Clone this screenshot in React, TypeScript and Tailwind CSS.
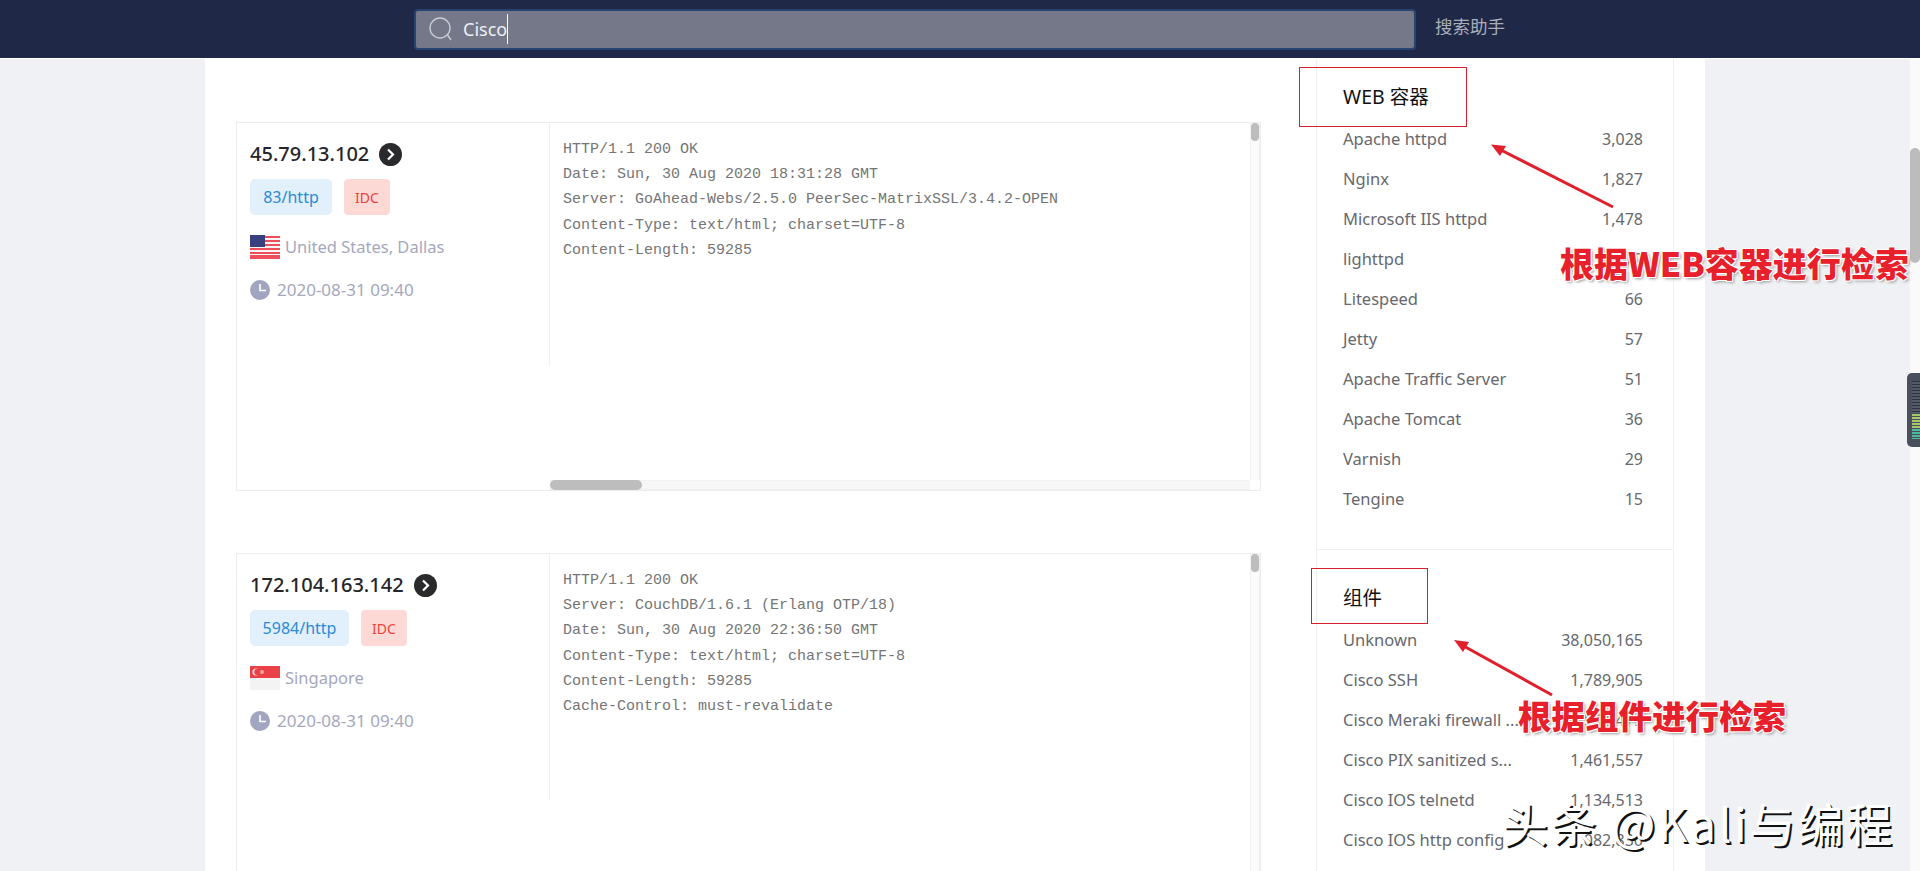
const webServers = [
  ['Apache httpd', '3,028'],
  ['Nginx', '1,827'],
  ['Microsoft IIS httpd', '1,478'],
  ['lighttpd', '72'],
  ['Litespeed', '66'],
  ['Jetty', '57'],
  ['Apache Traffic Server', '51'],
  ['Apache Tomcat', '36'],
  ['Varnish', '29'],
  ['Tengine', '15'],
];

const components = [
  ['Unknown', '38,050,165'],
  ['Cisco SSH', '1,789,905'],
  ['Cisco Meraki firewall ...', '1,541,479'],
  ['Cisco PIX sanitized s...', '1,461,557'],
  ['Cisco IOS telnetd', '1,134,513'],
  ['Cisco IOS http config', '1,082,830'],
];

function UsFlag() {
  return (
    <svg width="30" height="24" viewBox="0 0 30 24" className="shrink-0">
      <rect width="30" height="24" fill="#f6f4f6" />
      {[0, 4, 8, 12, 16, 20].map((y) => (
        <rect key={y} y={y + 1} width="30" height="2" fill="#ee4e5c" />
      ))}
      <rect y="20" width="30" height="4" fill="#ee4e5c" />
      <rect width="15" height="12" fill="#39407f" />
    </svg>
  );
}

function SgFlag() {
  return (
    <svg width="30" height="24" viewBox="0 0 30 24" className="shrink-0">
      <rect width="30" height="24" fill="#f4f3f4" />
      <rect width="30" height="12" fill="#ea4148" />
      <circle cx="6" cy="6" r="3.6" fill="#fbe3e3" />
      <circle cx="7.4" cy="6" r="3.2" fill="#ea4148" />
      <circle cx="12" cy="6" r="2" fill="#f5a3a6" />
    </svg>
  );
}

function ClockIcon() {
  return (
    <svg width="20" height="20" viewBox="0 0 20 20" className="shrink-0">
      <circle cx="10" cy="10" r="10" fill="#a2a5c0" />
      <path d="M10 4v6.5h6" fill="none" stroke="#fff" strokeWidth="1.6" />
    </svg>
  );
}

function GoIcon() {
  return (
    <svg width="23" height="23" viewBox="0 0 23 23" className="shrink-0">
      <circle cx="11.5" cy="11.5" r="11.5" fill="#2a2a2c" />
      <path d="M9 6.5l5 5-5 5" fill="none" stroke="#fff" strokeWidth="2.2" />
    </svg>
  );
}

function HostCard({ ip, port, portWidth, flag, place, lines, paneHeight, gap }: {
  ip: string;
  port: string;
  portWidth: string;
  flag: React.ReactNode;
  place: string;
  lines: string[];
  paneHeight: string;
  gap: string;
}) {
  return (
    <div className={`flex flex-col border border-[#ececee] h-[369px] ${gap}`}>
      <div className="flex flex-1 min-h-0">
        <div className={`w-[313px] shrink-0 border-r border-[#efeff1] pl-[13px] pt-[17px] ${paneHeight}`}>
          <div className="flex items-center gap-[10px] h-[28px]">
            <span className="text-[20px] text-[#26262a] font-medium">{ip}</span>
            <GoIcon />
          </div>
          <div className="flex items-center gap-[12px] mt-[11px]">
            <span className={`${portWidth} h-[36px] rounded-[5px] bg-[#e2f0fb] text-[#2b8ad6] text-[16px] flex items-center justify-center`}>
              {port}
            </span>
            <span className="w-[46px] h-[36px] rounded-[4px] bg-[#fdd9d6] text-[#e8433a] text-[14px] flex items-center justify-center">
              IDC
            </span>
          </div>
          <div className="flex items-center gap-[5px] mt-[20px] h-[24px] text-[16.500px] text-[#a5a7bd]">
            {flag}
            <span>{place}</span>
          </div>
          <div className="flex items-center gap-[7px] mt-[19px] h-[24px] text-[17px] text-[#a5a7bd]">
            <ClockIcon />
            <span>2020-08-31 09:40</span>
          </div>
        </div>
        <div className="flex-1 pl-[13px] pt-[14px] font-['Liberation_Mono',monospace] text-[15px] leading-[25.2px] text-[#757575] whitespace-pre">
          {lines.map((line) => (
            <div key={line}>{line}</div>
          ))}
        </div>
        <div className="w-[10px] shrink-0 border-x border-[#f1f1f1] bg-[#fbfbfb]">
          <div className="w-[8px] h-[18px] rounded-[4px] bg-[#bdbdbd]" />
        </div>
      </div>
      <div className="flex h-[10px] shrink-0">
        <div className="w-[313px] shrink-0" />
        <div className="flex-1 bg-[#f7f7f7] border-y border-[#f1f1f1] relative">
          <div className="absolute left-0 top-[-1px] w-[92px] h-[10px] rounded-[5px] bg-[#bdbdbd]" />
        </div>
        <div className="w-[10px] shrink-0" />
      </div>
    </div>
  );
}

function FacetRow({ name, count }: { name: string; count: string }) {
  return (
    <div className="flex items-center justify-between h-10 text-[#66686e]">
      <span className="whitespace-nowrap text-[16.500px]">{name}</span>
      <span className="text-[16px]">{count}</span>
    </div>
  );
}

function Annotations() {
  const label = "font-['Noto_Sans_CJK_SC',sans-serif] font-black text-[#e7202c] whitespace-nowrap [text-shadow:1px_1px_0_#fff,-1px_-1px_0_#fff,1px_-1px_0_#fff,-1px_1px_0_#fff,2px_2px_3px_#999]";
  return (
    <>
      <div className="absolute left-[1299px] top-[67px] w-[168px] h-[60px] border border-[#d4202c]" />
      <div className="absolute left-[1311px] top-[568px] w-[117px] h-[56px] border border-[#d4202c]" />
      <svg className="absolute left-0 top-0 pointer-events-none" width="1920" height="871">
        <path d="M1613 207L1497 148" stroke="#e0202c" strokeWidth="3" />
        <path d="M1491 144.500L1506 146L1500 156Z" fill="#e0202c" />
        <path d="M1552 695L1460 644" stroke="#e0202c" strokeWidth="3" />
        <path d="M1454 640L1469 642L1463 652Z" fill="#e0202c" />
      </svg>
      <div className={`absolute left-[1560px] top-[238px] text-[34px] leading-[50px] ${label}`}>根据WEB容器进行检索</div>
      <div className={`absolute left-[1518px] top-[690px] text-[33.500px] leading-[50px] ${label}`}>根据组件进行检索</div>
      <div className="absolute left-[1502px] top-[792px] font-['Noto_Sans_CJK_SC',sans-serif] text-[46px] tracking-[2.500px] leading-[60px] text-white whitespace-nowrap [text-shadow:2px_2px_0_#111]">
        头条 @Kali与编程
      </div>
      <div className="absolute right-0 top-[373px] w-[13px] h-[74px] rounded-l-[5px] bg-[#4a4f5c] pl-[5px] pt-[8px] flex flex-col justify-between pb-[8px]">
        <div className="h-[32px] w-[8px] bg-[repeating-linear-gradient(#2f3340_0,#2f3340_1px,#555a68_1px,#555a68_3px)]" />
        <div className="h-[14px] w-[8px] bg-[repeating-linear-gradient(#a4c86a_0,#a4c86a_2px,#4a4f5c_2px,#4a4f5c_3px)]" />
        <div className="h-[10px] w-[8px] bg-[repeating-linear-gradient(#4fb8a0_0,#4fb8a0_2px,#4a4f5c_2px,#4a4f5c_3px)]" />
      </div>
    </>
  );
}

export default function App() {
  return (
    <div className="relative h-[871px] overflow-hidden flex flex-col bg-[#eff1f4] font-['Noto_Sans','Noto_Sans_CJK_SC',sans-serif]">
      {/* Top bar */}
      <header className="h-[58px] shrink-0 bg-[#1f2947] flex items-center pl-[414px]">
        <div className="w-[1002px] h-[41px] rounded-[4px] bg-[#747889] border-2 border-[#27436f] flex items-center pl-[13px] gap-[10px]">
          <svg width="24" height="24" viewBox="0 0 24 24" fill="none" stroke="#c9cbd4" strokeWidth="1.4">
            <circle cx="11" cy="11" r="10" />
            <path d="M18.500 18l3.500 5" />
          </svg>
          <span className="text-[18px] text-[#eef0f4] border-r border-white leading-[30px]">Cisco</span>
        </div>
        <span className="ml-[19px] mb-[5px] text-[17.500px] text-[#a9adb9]">搜索助手</span>
      </header>

      <div className="flex flex-1 min-h-0 border-t border-white">
        <div className="w-[205px] shrink-0" />
        <main className="w-[1500px] shrink-0 bg-white flex pl-[31px]">
          {/* Results */}
          <div className="w-[1025px] shrink-0 pt-[63px]">
            <HostCard
              ip="45.79.13.102"
              port="83/http"
              portWidth="w-[82px]"
              flag={<UsFlag />}
              place="United States, Dallas"
              paneHeight="h-[243px]"
              gap="mb-[62px]"
              lines={[
                'HTTP/1.1 200 OK',
                'Date: Sun, 30 Aug 2020 18:31:28 GMT',
                'Server: GoAhead-Webs/2.5.0 PeerSec-MatrixSSL/3.4.2-OPEN',
                'Content-Type: text/html; charset=UTF-8',
                'Content-Length: 59285',
              ]}
            />
            <HostCard
              ip="172.104.163.142"
              port="5984/http"
              portWidth="w-[99px]"
              flag={<SgFlag />}
              place="Singapore"
              paneHeight="h-[245px]"
              gap=""
              lines={[
                'HTTP/1.1 200 OK',
                'Server: CouchDB/1.6.1 (Erlang OTP/18)',
                'Date: Sun, 30 Aug 2020 22:36:50 GMT',
                'Content-Type: text/html; charset=UTF-8',
                'Content-Length: 59285',
                'Cache-Control: must-revalidate',
              ]}
            />
          </div>

          {/* Facets */}
          <aside className="w-[358px] shrink-0 ml-[55px] border-x border-[#eeeff1]">
            <section className="h-[491px] border-b border-[#eeeff1] pl-[26px] pr-[30px] pt-[17px]">
              <h3 className="h-[41px] mb-[2px] flex items-center text-[19.500px] text-[#111]">WEB 容器</h3>
              {webServers.map(([name, count]) => (
                <FacetRow key={name} name={name} count={count} />
              ))}
            </section>
            <section className="pl-[26px] pr-[30px] pt-[27px]">
              <h3 className="h-[42px] mb-[1px] flex items-center text-[19.500px] text-[#111]">组件</h3>
              {components.map(([name, count]) => (
                <FacetRow key={name} name={name} count={count} />
              ))}
            </section>
          </aside>
        </main>
        <div className="flex-1" />
        {/* Page scrollbar */}
        <div className="w-[10px] shrink-0 bg-[#fafafa] pt-[89px]">
          <div className="h-[115px] rounded-[5px] bg-[#bcbcbc]" />
        </div>
      </div>

      <Annotations />
    </div>
  );
}
